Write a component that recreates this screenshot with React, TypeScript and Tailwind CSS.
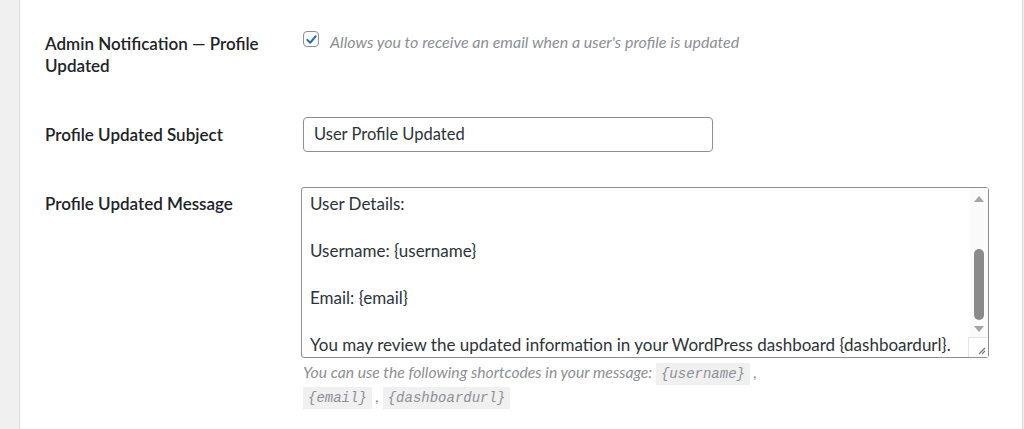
import React from "react";

const labelCls =
  "w-[257px] shrink-0 text-[17px] font-semibold leading-[22px] text-[#1d2327]";

function Code({ children }: { children: React.ReactNode }) {
  return (
    <code className="bg-[#f0f0f1] px-[5px] py-[3px] font-['Liberation_Mono',monospace] text-[14px] italic text-[#8c8f94]">
      {children}
    </code>
  );
}

function FakeScrollbar() {
  return (
    <div className="flex w-[18px] shrink-0 flex-col items-center bg-[#fafafa]">
      <div className="mt-[8px] h-0 w-0 border-x-[5px] border-b-[6px] border-x-transparent border-b-[#a3a3a3]" />
      <div className="mt-[47px] h-[71px] w-[10px] rounded-full bg-[#8a8a8a]" />
      <div className="mt-[6px] h-0 w-0 border-x-[5px] border-t-[6px] border-x-transparent border-t-[#a3a3a3]" />
      <div className="mt-auto flex h-[20px] w-[20px] items-end justify-end self-end border-l border-t border-[#e5e5e5] bg-white pb-[2px] pr-[2px]">
        <svg width="10" height="10" viewBox="0 0 10 10">
          <path d="M9 3 L3 9 M9 6 L6 9" stroke="#777" strokeWidth="1.2" />
        </svg>
      </div>
    </div>
  );
}

export default function App() {
  const lines = [
    "User Details:",
    "",
    "Username: {username}",
    "",
    "Email: {email}",
    "",
    "You may review the updated information in your WordPress dashboard {dashboardurl}.",
  ];

  return (
    <div className="flex h-[429px] w-[1024px] overflow-hidden bg-[#f0f0f1] font-['Lato',sans-serif]">
      <div className="w-[19px] shrink-0" />
      <div className="flex flex-1 flex-col border-x border-[#dcdcde] bg-white pl-[25px] pt-[33px]">
        {/* row 1 */}
        <div className="flex">
          <div className={labelCls}>
            Admin Notification — Profile
            <br />
            Updated
          </div>
          <label className="ml-px flex items-start gap-[11px]">
            <span className="mt-[-2px] flex h-[16px] w-[16px] items-center justify-center rounded-[4px] border border-[#8c8f94] bg-white">
              <svg width="13" height="13" viewBox="0 0 20 20">
                <path
                  d="M3.5 10.5 L8 15 L16.5 5"
                  fill="none"
                  stroke="#2271b1"
                  strokeWidth="3"
                  strokeLinecap="round"
                  strokeLinejoin="round"
                />
              </svg>
            </span>
            <span className="mt-[-1px] text-[16px] italic leading-[20px] text-[#8c8f94]">
              Allows you to receive an email when a user's profile is updated
            </span>
          </label>
        </div>

        {/* row 2 */}
        <div className="mt-[40px] flex items-center">
          <div className={labelCls}>Profile Updated Subject</div>
          <div className="ml-px flex h-[35px] w-[410px] items-center rounded-[4px] border border-[#8c8f94] px-[10px] text-[16.5px] text-[#2c3338]">
            User Profile Updated
          </div>
        </div>

        {/* row 3 */}
        <div className="mt-[35px] flex">
          <div className={`${labelCls} pt-[6px]`}>Profile Updated Message</div>
          <div className="-ml-px flex flex-col">
            <div className="flex h-[171px] w-[688px] rounded-[3px] border border-[#8c8f94]">
              <div className="flex-1 overflow-hidden px-[8px] pt-[4px] text-[17px] leading-[23.5px] text-[#2c3338]">
                {lines.map((l, i) => (
                  <div key={i} className="h-[23.5px] whitespace-nowrap">
                    {l}
                  </div>
                ))}
              </div>
              <FakeScrollbar />
            </div>
            <p className="mt-[3px] w-[480px] pl-[2px] text-[15.7px] italic leading-[22px] text-[#8c8f94]">
              You can use the following shortcodes in your message:{" "}
              <Code>{"{username}"}</Code> , <Code>{"{email}"}</Code> ,{" "}
              <Code>{"{dashboardurl}"}</Code>
            </p>
          </div>
        </div>
      </div>
      <div className="w-px shrink-0" />
    </div>
  );
}
